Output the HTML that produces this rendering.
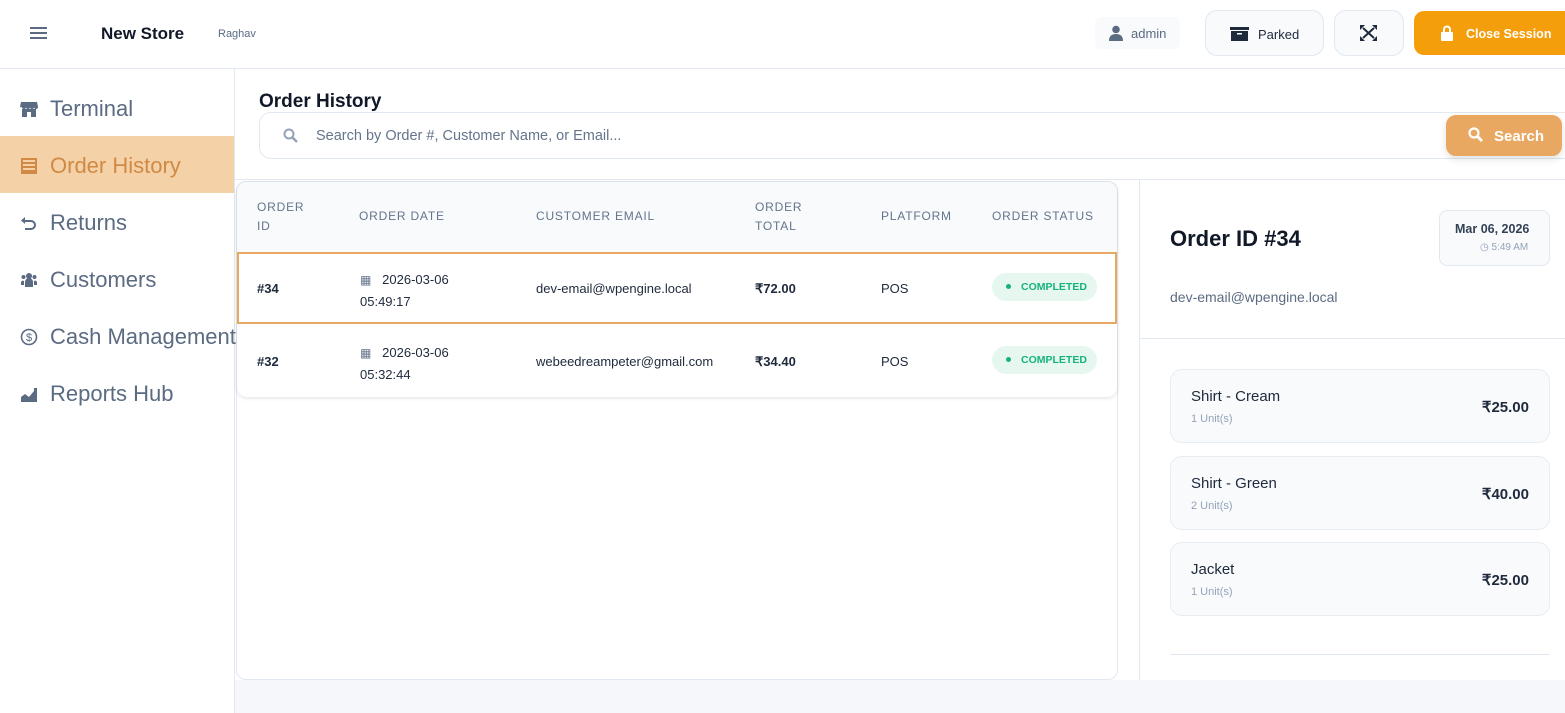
<!DOCTYPE html>
<html><head><meta charset="utf-8"><style>
*{box-sizing:border-box;margin:0;padding:0}
body{width:1565px;height:713px;overflow:hidden;font-family:"Liberation Sans",sans-serif;background:#fff;position:relative;color:#1e293b}
.a{position:absolute}
.nav{position:absolute;left:20px;font-size:22px;color:#5b6b82;display:flex;align-items:center;gap:12px;height:30px}
.nav svg{width:18px;height:18px;fill:#5b6b82}
.th{position:absolute;font-size:12px;color:#64748b;letter-spacing:0.8px;line-height:19px}
.td{position:absolute;font-size:13px;color:#1e293b}
.b{font-weight:bold}
.badge{position:absolute;left:992px;width:105px;height:28px;border-radius:14px;background:#e6f7ef;color:#16b47a;font-size:10.5px;font-weight:bold;line-height:28px;padding-left:14px}
.badge:before{content:"";display:inline-block;width:5px;height:5px;border-radius:50%;background:#16b47a;margin-right:10px;vertical-align:middle;position:relative;top:-1px}
.item{position:absolute;left:1170px;width:380px;height:74px;background:#f8fafc;border:1px solid #e8edf3;border-radius:12px}
.item .n{position:absolute;left:20px;top:18px;font-size:15px;color:#1e293b}
.item .u{position:absolute;left:20px;top:43px;font-size:11px;color:#94a3b8}
.item .p{position:absolute;right:20px;top:28px;font-size:15px;font-weight:bold}
</style></head><body>
<div class="a" style="left:0;top:0;width:1565px;height:69px;border-bottom:1px solid #e2e8f0;background:#fff"></div>
<div class="a" style="left:30px;top:27px;width:17px;height:2px;background:#5b6b82;box-shadow:0 5px 0 #5b6b82,0 10px 0 #5b6b82"></div>
<div class="a b" style="left:101px;top:24px;font-size:17px;color:#111827">New Store</div>
<div class="a" style="left:218px;top:28px;font-size:11px;color:#5b6b82">Raghav</div>
<div class="a" style="left:1095px;top:17px;width:85px;height:32px;background:#f8fafc;border-radius:6px"></div>
<svg class="a" style="left:1109px;top:25px" width="14" height="16" viewBox="0 0 14 16"><circle cx="7" cy="4.5" r="3.8" fill="#5b6b82"/><path d="M0 16 Q0 9 7 9 Q14 9 14 16Z" fill="#5b6b82"/></svg>
<div class="a" style="left:1131px;top:26px;font-size:13px;color:#5b6b82">admin</div>
<div class="a" style="left:1205px;top:10px;width:119px;height:46px;border:1px solid #e2e8f0;border-radius:12px;background:#f8fafc"></div>
<svg class="a" style="left:1230px;top:27px" width="19" height="14" viewBox="0 0 19 14"><rect x="0" y="0" width="19" height="3" fill="#1e293b"/><rect x="1" y="4" width="17" height="10" fill="#1e293b"/><rect x="7" y="6" width="5" height="1.5" fill="#fff"/></svg>
<div class="a" style="left:1258px;top:27px;font-size:13px;color:#1e293b">Parked</div>
<div class="a" style="left:1334px;top:10px;width:70px;height:46px;border:1px solid #e2e8f0;border-radius:12px;background:#f8fafc"></div>
<svg class="a" style="left:1360px;top:25px" width="17" height="16" viewBox="0 0 17 16" stroke="#1e293b" stroke-width="2" fill="#1e293b"><path d="M3 3 L14 13 M14 3 L3 13"/><path d="M0 0h5l-5 5z M17 0h-5l5 5z M0 16h5l-5-5z M17 16h-5l5-5z" stroke="none"/></svg>
<div class="a" style="left:1414px;top:11px;width:160px;height:44px;border-radius:10px;background:#f59e0b"></div>
<svg class="a" style="left:1441px;top:25px" width="12" height="16" viewBox="0 0 12 16"><path d="M3 7V4.5a3 3 0 0 1 6 0V7" stroke="#fff" stroke-width="2" fill="none"/><rect x="0" y="7" width="12" height="9" rx="1" fill="#fff"/></svg>
<div class="a b" style="left:1466px;top:27px;font-size:12.5px;color:#fff">Close Session</div>
<div class="a" style="left:234px;top:69px;width:1px;height:644px;background:#e2e8f0"></div>
<div class="a" style="left:0;top:136px;width:234px;height:57px;background:#f4d1a6"></div>
<div class="nav" style="top:94px"><svg viewBox="0 0 18 18"><path d="M1 2h16l1 5a2 2 0 0 1-4 0 2 2 0 0 1-4 0 2 2 0 0 1-4 0 2 2 0 0 1-4 0 2 2 0 0 1-2 0z M2 9h14v8H11v-5H7v5H2z"/></svg>Terminal</div>
<div class="nav" style="top:151px;color:#d08a45"><svg viewBox="0 0 18 18" style="fill:#d08a45"><path d="M1 1h16v16H1z M3 3v2h12V3z M3 7v2h12V7z M3 11v2h12v-2z M3 15h12v0z" fill-rule="evenodd"/></svg>Order History</div>
<div class="nav" style="top:208px"><svg viewBox="0 0 18 18"><path d="M5 3 1 6.5 5 10V8h6a3 3 0 0 1 0 6H5v2h6a5 5 0 0 0 0-10H5z"/></svg>Returns</div>
<div class="nav" style="top:265px"><svg viewBox="0 0 18 18"><circle cx="9" cy="5" r="3"/><circle cx="3.5" cy="6" r="2"/><circle cx="14.5" cy="6" r="2"/><path d="M5 16v-5a4 4 0 0 1 8 0v5z M1 14v-3a2 2 0 0 1 3-1v4z M17 14v-3a2 2 0 0 0-3-1v4z"/></svg>Customers</div>
<div class="nav" style="top:322px"><svg viewBox="0 0 18 18"><circle cx="9" cy="9" r="7.5" fill="none" stroke="#5b6b82" stroke-width="1.6"/><text x="9" y="13" font-size="11" text-anchor="middle" fill="#5b6b82" font-family="Liberation Sans">$</text></svg>Cash Management</div>
<div class="nav" style="top:379px"><svg viewBox="0 0 18 18"><path d="M1 17V12l4-3 4 3 5-6V3h3v14z"/></svg>Reports Hub</div>
<div class="a" style="left:235px;top:680px;width:1330px;height:33px;background:#f5f7fa"></div>
<div class="a b" style="left:259px;top:91px;font-size:19px;color:#111827">Order History</div>
<div class="a" style="left:259px;top:112px;width:1320px;height:47px;border:1px solid #e2e8f0;border-radius:12px;background:#fff"></div>
<svg class="a" style="left:283px;top:128px" width="15" height="15" viewBox="0 0 15 15"><circle cx="6" cy="6" r="4.5" stroke="#94a3b8" stroke-width="2" fill="none"/><path d="M9.5 9.5 14 14" stroke="#94a3b8" stroke-width="2.5"/></svg>
<div class="a" style="left:316px;top:128px;font-size:14.5px;color:#64748b">Search by Order #, Customer Name, or Email...</div>
<div class="a" style="left:1446px;top:115px;width:116px;height:41px;border-radius:10px;background:#e8a862;box-shadow:0 3px 8px rgba(0,0,0,.12)"></div>
<svg class="a" style="left:1468px;top:127px" width="15" height="15" viewBox="0 0 15 15"><circle cx="6" cy="6" r="4.5" stroke="#fff" stroke-width="2.2" fill="none"/><path d="M9.5 9.5 14 14" stroke="#fff" stroke-width="2.8"/></svg>
<div class="a b" style="left:1494px;top:128px;font-size:15px;color:#fff">Search</div>
<div class="a" style="left:235px;top:179px;width:1330px;height:1px;background:#e2e8f0"></div>
<div class="a" style="left:236px;top:181px;width:882px;height:499px;border:1px solid #e2e8f0;border-radius:10px;background:#fff"></div>
<div class="a" style="left:237px;top:182px;width:880px;height:215px;border-radius:10px;box-shadow:0 1px 4px rgba(0,0,0,.12);background:#fff;overflow:hidden">
<div style="height:70px;background:#f8fafc"></div></div>
<div class="th" style="left:257px;top:198px">ORDER<br>ID</div>
<div class="th" style="left:359px;top:207px">ORDER DATE</div>
<div class="th" style="left:536px;top:207px">CUSTOMER EMAIL</div>
<div class="th" style="left:755px;top:198px">ORDER<br>TOTAL</div>
<div class="th" style="left:881px;top:207px">PLATFORM</div>
<div class="th" style="left:992px;top:207px">ORDER STATUS</div>
<div class="a" style="left:237px;top:252px;width:880px;height:72px;border:2px solid #e8a862"></div>
<div class="td b" style="left:257px;top:281px">#34</div>
<div class="td" style="left:360px;top:269px;line-height:22px"><span style="color:#64748b;font-size:12px">▦</span>&nbsp;&nbsp; 2026-03-06<br>05:49:17</div>
<div class="td" style="left:536px;top:281px">dev-email@wpengine.local</div>
<div class="td b" style="left:755px;top:281px">₹72.00</div>
<div class="td" style="left:881px;top:281px">POS</div>
<div class="badge" style="top:273px">COMPLETED</div>
<div class="td b" style="left:257px;top:354px">#32</div>
<div class="td" style="left:360px;top:342px;line-height:22px"><span style="color:#64748b;font-size:12px">▦</span>&nbsp;&nbsp; 2026-03-06<br>05:32:44</div>
<div class="td" style="left:536px;top:354px">webeedreampeter@gmail.com</div>
<div class="td b" style="left:755px;top:354px">₹34.40</div>
<div class="td" style="left:881px;top:354px">POS</div>
<div class="badge" style="top:346px">COMPLETED</div>
<div class="a" style="left:1139px;top:180px;width:1px;height:500px;background:#e2e8f0"></div>
<div class="a b" style="left:1170px;top:226px;font-size:22px;color:#111827">Order ID #34</div>
<div class="a" style="left:1439px;top:210px;width:111px;height:56px;border:1px solid #e2e8f0;border-radius:8px;background:#f8fafc"></div>
<div class="a b" style="left:1455px;top:222px;font-size:12.5px;color:#334155">Mar 06, 2026</div>
<div class="a" style="left:1480px;top:242px;font-size:10px;color:#94a3b8">◷ 5:49 AM</div>
<div class="a" style="left:1170px;top:289px;font-size:14px;color:#5b6b82">dev-email@wpengine.local</div>
<div class="a" style="left:1140px;top:338px;width:425px;height:1px;background:#e2e8f0"></div>
<div class="item" style="top:369px"><div class="n">Shirt - Cream</div><div class="u">1 Unit(s)</div><div class="p">₹25.00</div></div>
<div class="item" style="top:456px"><div class="n">Shirt - Green</div><div class="u">2 Unit(s)</div><div class="p">₹40.00</div></div>
<div class="item" style="top:542px"><div class="n">Jacket</div><div class="u">1 Unit(s)</div><div class="p">₹25.00</div></div>
<div class="a" style="left:1170px;top:654px;width:380px;height:1px;background:#e2e8f0"></div>
</body></html>
